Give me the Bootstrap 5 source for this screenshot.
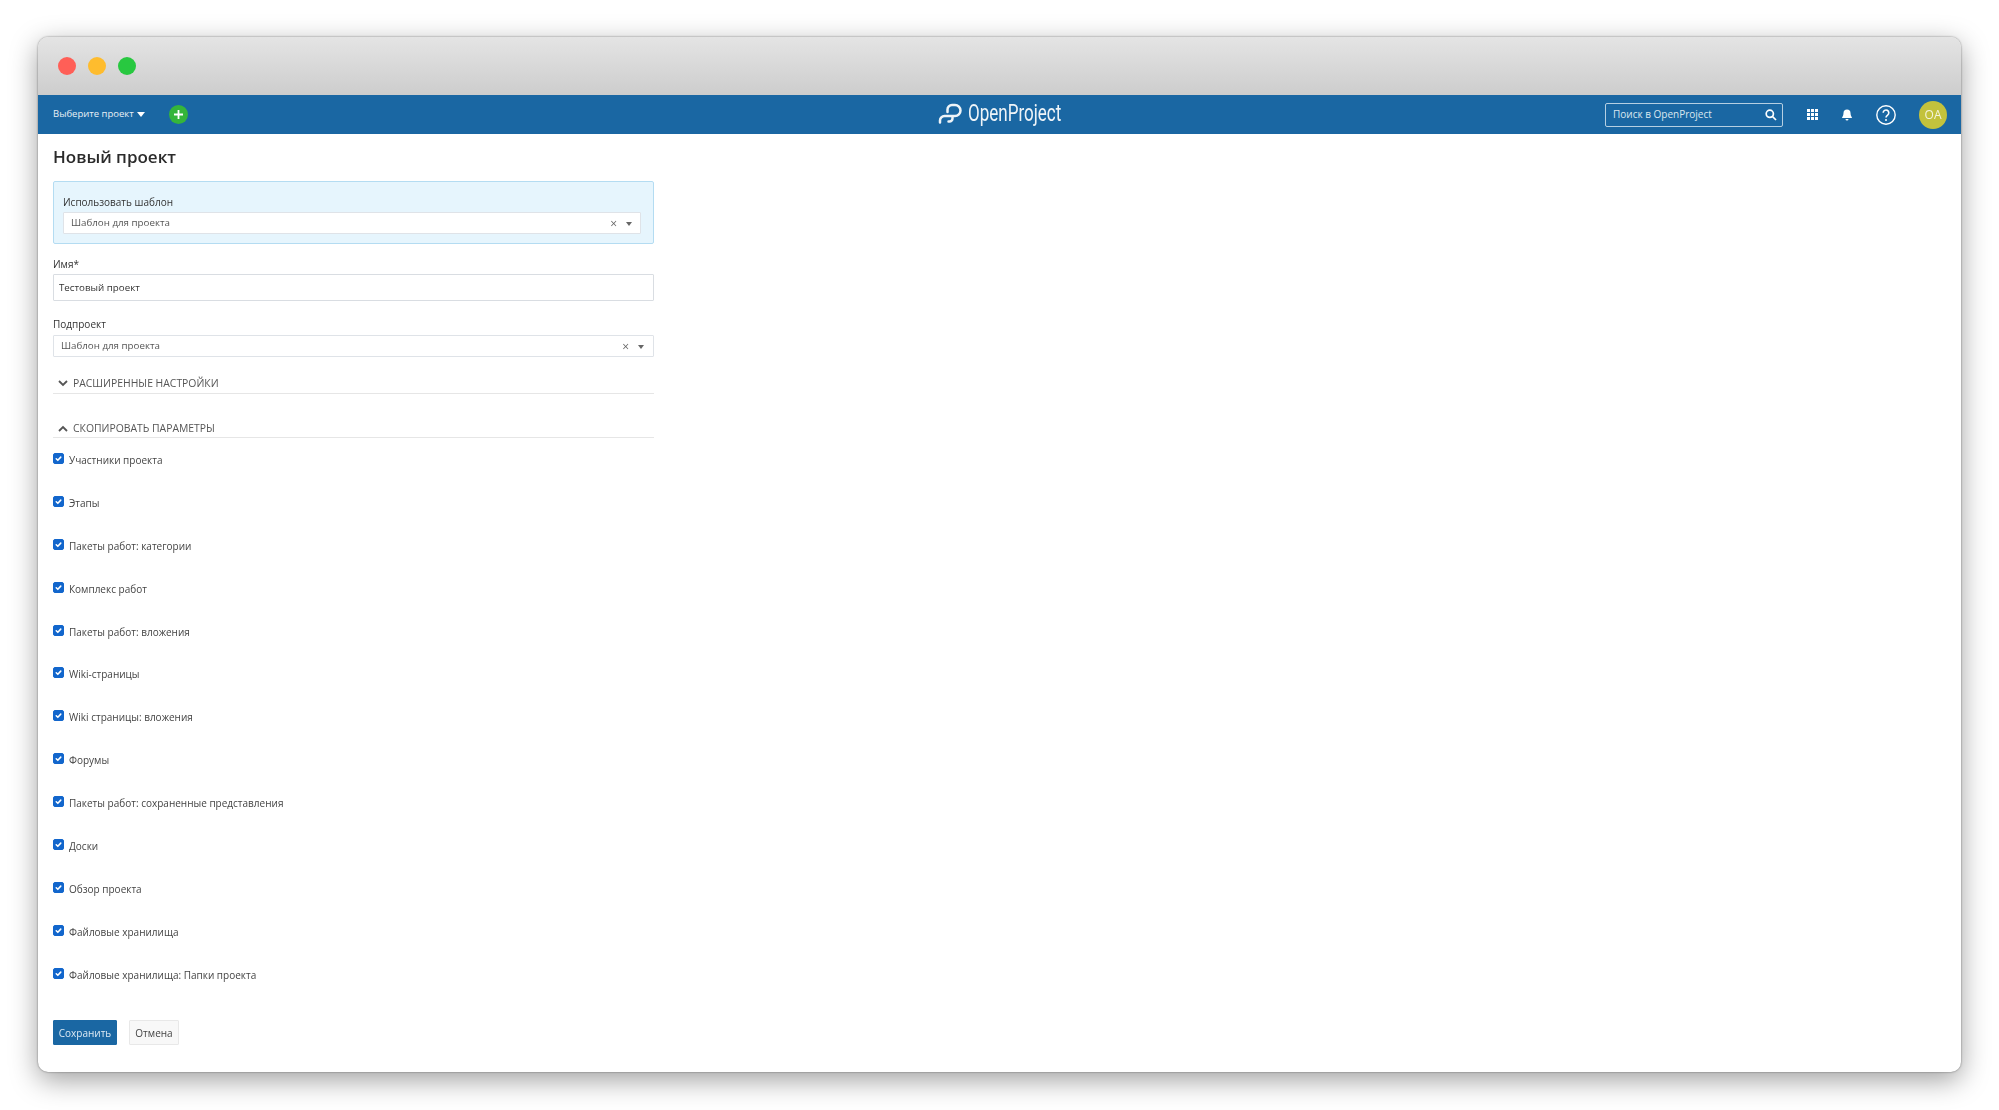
<!DOCTYPE html>
<html lang="ru">
<head>
<meta charset="utf-8">
<title>Новый проект</title>
<link href="https://cdn.jsdelivr.net/npm/bootstrap@5.3.0/dist/css/bootstrap.min.css" rel="stylesheet">
<style>
html,body{height:100%;background:#fff;overflow:hidden}
body{font-family:"Open Sans","Noto Sans",sans-serif;font-size:10px;color:#333}
.mac-win{margin:37px 0 0 38px;width:1923px;height:1035px;border-radius:10px;background:#fff;box-shadow:0 8px 28px rgba(0,0,0,.38),0 0 2px rgba(0,0,0,.5);overflow:hidden}
.mac-inner{filter:blur(.5px);height:100%}
.mac-bar{height:58px;background:linear-gradient(#e4e4e4,#cdcdcd);padding-left:20px;gap:12px}
.light{width:18px;height:18px;border-radius:50%}
.l-r{background:#ff5f57}.l-y{background:#febc2e}.l-g{background:#28c840}
.top-nav{height:39px;background:#1a67a3;color:#e8f0f6;padding:0 14px 0 15px}
.nav-side{flex:1 1 0}
.proj-pick{font-size:9.500px;color:#e8f0f6}
.caret-d{width:0;height:0;border-left:4px solid transparent;border-right:4px solid transparent;border-top:5px solid #fff;margin-left:3px}
.plus-btn{width:19px;height:19px;border-radius:50%;background:#35b53a;margin-left:24px}
.logo-brand{margin-top:-2px}
.logo-t{font-family:"Roboto","Liberation Sans",sans-serif;font-size:23px;line-height:24px;color:#eef4f8;font-weight:400;display:inline-block;margin-left:6px;margin-right:-32px;transform:scaleX(.74);transform-origin:left center}
.search-wrap{width:178px;height:24px;border:1px solid #b5cfe2;border-radius:2px;padding:0 5px 0 7px;margin-right:24px}
.search-wrap input{background:transparent;border:0;outline:0;color:#fff;font-size:10px;width:100%;padding:0}
.search-wrap input::placeholder{color:#dbe7f0;opacity:1}
.nav-ic-a{margin-right:24px}
.nav-ic-b{margin-right:24px}
.nav-ic-c{margin-right:23px}
.avatar-oa{width:28px;height:28px;border-radius:50%;background:#c3c23c;color:#f4f4dc;font-size:12px}
.page-main{padding:11px 0 0 15px}
.page-ttl{font-size:17px;line-height:24px;font-weight:600;margin:0 0 12px;color:#2b2b2b}
.form-w{width:601px}
.tpl-box{height:63px;background:#e6f5fd;border:1px solid #b4dcf2;border-radius:2px;padding:13px 12px 0 9px}
.f-lbl{display:block;line-height:14px;font-size:10px;margin:0;color:#333}
.sel-box{background:#fff;border:1px solid #dfe3e8;border-radius:1px;color:#555;font-size:9.750px;padding:1px 8px 0 7px}
.tpl-box .sel-box{height:22px;margin-top:3px}
.sub-sel{height:22px;margin-top:4px;padding:1px 9px 0 7px}
.x-mark{font-size:12px;color:#666;margin-right:9px;line-height:1}
.caret-g{width:0;height:0;border-left:3.500px solid transparent;border-right:3.500px solid transparent;border-top:4px solid #666}
.name-in{height:27px;margin-top:3px;border:1px solid #d9dde2;border-radius:1px;font-size:9.750px;padding:0 5px;color:#333}
.sec-h{display:flex;align-items:center;line-height:14px;font-size:10.400px;color:#555;border-bottom:1px solid #e6e6e6;padding-left:5px;gap:5px}
.sec-1{margin-top:19px;padding-bottom:3px}
.sec-2{margin-top:27px;padding-bottom:2px}
.cp-list{margin-top:15px}
.cp-row{height:42.900px;margin:0;padding:0;min-height:0;display:flex;align-items:flex-start;gap:5px}
.cp-row .form-check-input{width:11px;height:11px;margin:0;float:none;border-radius:2px;background-color:#1266cc;border-color:#1266cc;flex:none;background-size:100% 100%;background-image:url("data:image/svg+xml,%3csvg xmlns='http://www.w3.org/2000/svg' viewBox='0 0 20 20'%3e%3cpath fill='none' stroke='%23fff' stroke-linecap='round' stroke-linejoin='round' stroke-width='3.500' d='m5 10.500 3.500 3.500 6.500-7'/%3e%3c/svg%3e")}
.cp-row .form-check-label{line-height:14px;font-size:10px;color:#444;opacity:1}
.act-row{margin-top:9.400px;gap:12px}
.btn-sv,.btn-cn{height:25px;font-size:10px;line-height:25px;padding:0;border-radius:1px}
.btn-sv{width:64px;background:#1a67a3;border:1px solid #1a67a3;color:#dce9f3}
.btn-cn{width:50px;background:#f8f8f8;border:1px solid #e8e8e8;color:#444}
.mt-name{margin-top:13px}
.mt-sub{margin-top:16px}
</style>
</head>
<body>
<div class="mac-win">
<div class="mac-inner d-flex flex-column">
  <div class="mac-bar d-flex align-items-center">
    <span class="light l-r"></span><span class="light l-y"></span><span class="light l-g"></span>
  </div>
  <nav class="top-nav d-flex align-items-center">
    <div class="nav-side d-flex align-items-center">
      <span class="proj-pick">Выберите проект</span><span class="caret-d"></span>
      <span class="plus-btn d-flex align-items-center justify-content-center">
        <svg width="11" height="11" viewBox="0 0 11 11"><path d="M5.500 1v9M1 5.500h9" stroke="#fff" stroke-width="1.800"/></svg>
      </span>
    </div>
    <div class="logo-brand d-flex align-items-center">
      <svg width="24" height="21" viewBox="0 0 24 21" fill="none" stroke="#eef4f8" stroke-width="2.500" stroke-linecap="round"><path d="M2 19.500v-2a4.500 4.500 0 0 1 4.500-4.500H17a5.500 5.500 0 0 0 0-11h-3a4.500 4.500 0 0 0-4.500 4.500v2.500"/><path d="M14.500 13.500v2a3 3 0 0 1-3 3h-1"/></svg>
      <span class="logo-t">OpenProject</span>
    </div>
    <div class="nav-side d-flex align-items-center justify-content-end">
      <div class="search-wrap d-flex align-items-center">
        <input type="text" placeholder="Поиск в OpenProject">
        <svg class="flex-shrink-0" width="12" height="12" viewBox="0 0 12 12" fill="none" stroke="#fff" stroke-width="1.700"><circle cx="4.800" cy="4.800" r="3.600"/><path d="M7.500 7.500L11 11"/></svg>
      </div>
      <svg class="nav-ic-a" width="11" height="11" viewBox="0 0 11 11" fill="#fff"><rect width="3" height="3"/><rect x="4" width="3" height="3"/><rect x="8" width="3" height="3"/><rect y="4" width="3" height="3"/><rect x="4" y="4" width="3" height="3"/><rect x="8" y="4" width="3" height="3"/><rect y="8" width="3" height="3"/><rect x="4" y="8" width="3" height="3"/><rect x="8" y="8" width="3" height="3"/></svg>
      <svg class="nav-ic-b" width="10" height="12" viewBox="0 0 10 12" fill="#fff"><path d="M5 0.500a3.500 3.500 0 0 0-3.500 3.500c0 3-1.500 4-1.500 5h10c0-1-1.500-2-1.500-5A3.500 3.500 0 0 0 5 .5z"/><path d="M3.500 10h3a1.500 1.500 0 0 1-3 0z"/></svg>
      <svg class="nav-ic-c" width="20" height="20" viewBox="0 0 20 20" fill="none" stroke="#fff"><circle cx="10" cy="10" r="9.200" stroke-width="1.400"/><path d="M7.200 7.800a2.800 2.800 0 1 1 4.400 2.300c-1 .7-1.600 1.200-1.600 2.400" stroke-width="1.600"/><circle cx="10" cy="15" r="1" fill="#fff" stroke="none"/></svg>
      <span class="avatar-oa d-flex align-items-center justify-content-center">OA</span>
    </div>
  </nav>
  <main class="page-main flex-grow-1">
    <h1 class="page-ttl">Новый проект</h1>
    <form class="form-w">
      <div class="tpl-box">
        <span class="f-lbl">Использовать шаблон</span>
        <div class="sel-box d-flex align-items-center">
          <span class="flex-grow-1">Шаблон для проекта</span><span class="x-mark">×</span><span class="caret-g"></span>
        </div>
      </div>
      <label class="f-lbl mt-name" for="pname">Имя*</label>
      <input id="pname" class="form-control name-in" value="Тестовый проект">
      <span class="f-lbl mt-sub">Подпроект</span>
      <div class="sel-box sub-sel d-flex align-items-center">
        <span class="flex-grow-1">Шаблон для проекта</span><span class="x-mark">×</span><span class="caret-g"></span>
      </div>
      <div class="sec-h sec-1">
        <svg width="10" height="7" viewBox="0 0 10 7" fill="none" stroke="#555" stroke-width="1.800"><path d="M1 1l4 4 4-4"/></svg>
        <span>РАСШИРЕННЫЕ НАСТРОЙКИ</span>
      </div>
      <div class="sec-h sec-2">
        <svg width="10" height="7" viewBox="0 0 10 7" fill="none" stroke="#555" stroke-width="1.800"><path d="M1 6l4-4 4 4"/></svg>
        <span>СКОПИРОВАТЬ ПАРАМЕТРЫ</span>
      </div>
      <div class="cp-list">
        <div class="form-check cp-row"><input class="form-check-input" type="checkbox" checked id="c1"><label class="form-check-label" for="c1">Участники проекта</label></div>
        <div class="form-check cp-row"><input class="form-check-input" type="checkbox" checked id="c2"><label class="form-check-label" for="c2">Этапы</label></div>
        <div class="form-check cp-row"><input class="form-check-input" type="checkbox" checked id="c3"><label class="form-check-label" for="c3">Пакеты работ: категории</label></div>
        <div class="form-check cp-row"><input class="form-check-input" type="checkbox" checked id="c4"><label class="form-check-label" for="c4">Комплекс работ</label></div>
        <div class="form-check cp-row"><input class="form-check-input" type="checkbox" checked id="c5"><label class="form-check-label" for="c5">Пакеты работ: вложения</label></div>
        <div class="form-check cp-row"><input class="form-check-input" type="checkbox" checked id="c6"><label class="form-check-label" for="c6">Wiki-страницы</label></div>
        <div class="form-check cp-row"><input class="form-check-input" type="checkbox" checked id="c7"><label class="form-check-label" for="c7">Wiki страницы: вложения</label></div>
        <div class="form-check cp-row"><input class="form-check-input" type="checkbox" checked id="c8"><label class="form-check-label" for="c8">Форумы</label></div>
        <div class="form-check cp-row"><input class="form-check-input" type="checkbox" checked id="c9"><label class="form-check-label" for="c9">Пакеты работ: сохраненные представления</label></div>
        <div class="form-check cp-row"><input class="form-check-input" type="checkbox" checked id="c10"><label class="form-check-label" for="c10">Доски</label></div>
        <div class="form-check cp-row"><input class="form-check-input" type="checkbox" checked id="c11"><label class="form-check-label" for="c11">Обзор проекта</label></div>
        <div class="form-check cp-row"><input class="form-check-input" type="checkbox" checked id="c12"><label class="form-check-label" for="c12">Файловые хранилища</label></div>
        <div class="form-check cp-row"><input class="form-check-input" type="checkbox" checked id="c13"><label class="form-check-label" for="c13">Файловые хранилища: Папки проекта</label></div>
      </div>
      <div class="act-row d-flex">
        <button type="button" class="btn btn-sv">Сохранить</button>
        <button type="button" class="btn btn-cn">Отмена</button>
      </div>
    </form>
  </main>
</div>
</div>
<script src="https://cdn.jsdelivr.net/npm/bootstrap@5.3.0/dist/js/bootstrap.bundle.min.js"></script>
</body>
</html>
